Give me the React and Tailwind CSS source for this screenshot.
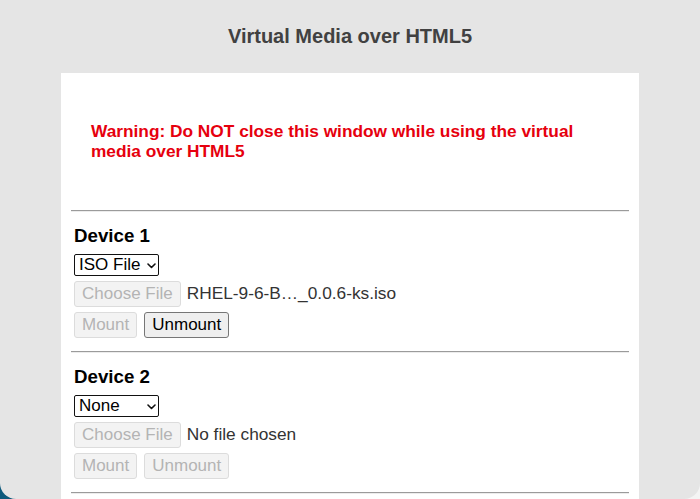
import React from 'react';

const font = "font-['Liberation_Sans',Arial,Helvetica,sans-serif]";

const Chevron = () => (
  <svg width="9" height="6" viewBox="0 0 9 6" className="pointer-events-none absolute right-[3px] top-[9px]">
    <path d="M1 1l3.5 3.5L8 1" fill="none" stroke="#111" strokeWidth="1.6" strokeLinecap="round" strokeLinejoin="round" />
  </svg>
);

const DeviceSelect = ({ value, options }) => (
  <div className="relative inline-flex w-[85px]">
    <select
      defaultValue={value}
      className="h-[22px] w-full appearance-none rounded-[2px] border border-[#111] bg-white pl-[4px] text-[17px] leading-[20px] text-black outline-none"
    >
      {options.map((o) => (
        <option key={o}>{o}</option>
      ))}
    </select>
    <Chevron />
  </div>
);

const Btn = ({ children, disabled }) => (
  <button
    disabled={disabled}
    className={`h-[26px] rounded-[3px] border px-[7px] text-[17px] leading-[24px] ${
      disabled ? 'border-[#dcdcdc] bg-[#f3f3f3] text-[#b4b4b4]' : 'border-[#767676] bg-[#efefef] text-black'
    }`}
  >
    {children}
  </button>
);

const Device = ({ n, mode, fileName, unmountEnabled }) => (
  <div>
    <div className="h-[2px] border-t border-b border-t-[#9b9b9b] border-b-[#ececec]" />
    <div className="pl-[3px] pt-[13px] pb-[13px]">
      <h3 className="text-[18.72px] font-bold leading-[22px] text-black">Device {n}</h3>
      <div className="mt-[7px] flex">
        <DeviceSelect value={mode} options={['None', 'ISO File', 'IMG File']} />
      </div>
      <div className="mt-[5px] flex items-center gap-[6px]">
        <Btn disabled>Choose File</Btn>
        <span className="text-[17.3px] text-[#333]">{fileName}</span>
      </div>
      <div className="mt-[5px] flex gap-[7px]">
        <Btn disabled>Mount</Btn>
        <Btn disabled={!unmountEnabled}>Unmount</Btn>
      </div>
    </div>
  </div>
);

export default function App() {
  return (
    <div className={`h-[499px] w-full bg-[linear-gradient(to_right,#0e5a7c_50%,#f4f4f4_50%)] ${font}`}>
      <div className="flex h-full flex-col items-center overflow-hidden rounded-b-[16px] bg-[#e5e5e5]">
        <h1 className="mt-[24px] text-[20px] font-bold leading-[24px] text-[#414141]">Virtual Media over HTML5</h1>
        <div className="mt-[25px] w-[578px] shrink-0 bg-white px-[10px] pb-[40px]">
          <p className="px-[20px] pt-[48px] pb-[49px] text-[17.3px] font-bold leading-[20px] text-[#e6000e]">
            Warning: Do NOT close this window while using the virtual media over HTML5
          </p>
          <Device n={1} mode="ISO File" fileName="RHEL-9-6-B…_0.0.6-ks.iso" unmountEnabled />
          <Device n={2} mode="None" fileName="No file chosen" />
          <div className="h-[2px] border-t border-b border-t-[#9b9b9b] border-b-[#ececec]" />
        </div>
      </div>
    </div>
  );
}
